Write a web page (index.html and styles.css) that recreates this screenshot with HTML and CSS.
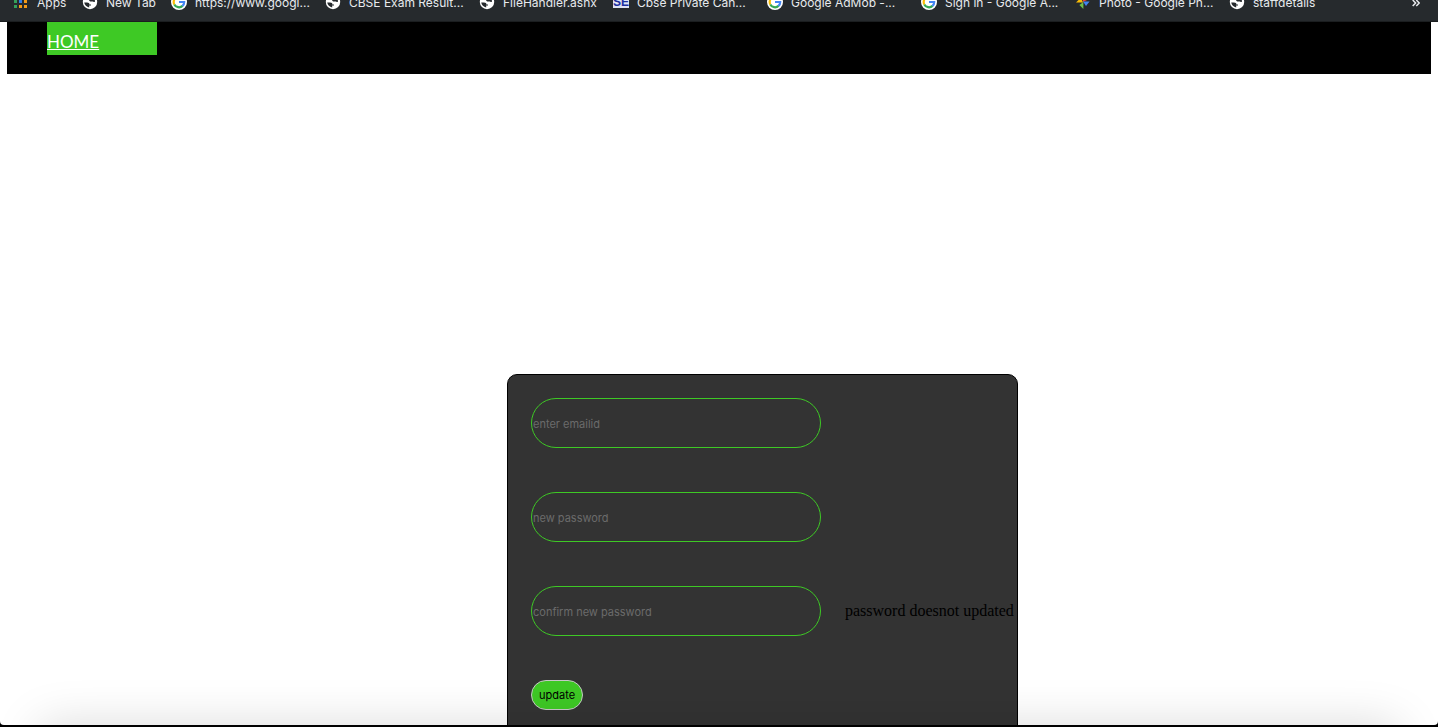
FILE: index.html
```html
<!DOCTYPE html>
<html lang="en">
<head>
<meta charset="utf-8">
<title>update</title>
<link rel="stylesheet" href="styles.css">
</head>
<body>
<svg class="symbols" aria-hidden="true">
  <symbol id="globe" viewBox="0 0 16 16">
    <circle cx="8" cy="8" r="7.2" fill="#fff"/>
    <path d="M2.2 8.6 H5 C6.8 8.6 7.4 9.4 7.4 10.4 H9 V11.6 H7.2 V13.4 C4.6 13 2.6 11.2 2.2 8.6Z M8.4 3 H10.4 C12 4 12.9 5.4 13 7.4 C12.4 8.4 11.4 8.2 10.8 7.6 H8.2 L7 6.4 L8.4 5.2Z" fill="#262a2d"/>
  </symbol>
  <symbol id="google" viewBox="0 0 16 16">
    <circle cx="8" cy="8" r="8" fill="#fff"/>
    <path d="M12 4 A5.3 5.3 0 0 0 3.3 5.6" fill="none" stroke="#ea4335" stroke-width="2.2"/>
    <path d="M3.3 5.6 A5.3 5.3 0 0 0 3.3 10.4" fill="none" stroke="#fbbc05" stroke-width="2.2"/>
    <path d="M3.3 10.4 A5.3 5.3 0 0 0 11.6 11.9" fill="none" stroke="#34a853" stroke-width="2.2"/>
    <path d="M8 8 H13.2 A5.3 5.3 0 0 1 11.4 12" fill="none" stroke="#4285f4" stroke-width="2.2"/>
  </symbol>
</svg>
<nav class="bookmarks">
  <a class="bookmark apps" href="#"><svg class="icon" viewBox="0 0 16 16"><path d="M0 1h3v3H0z M0 6h3v3H0z M0 11h3v3H0z" fill="#34a05a"/><path d="M5 1h3v3H5z M5 6h3v3H5z" fill="#2f7de9"/><path d="M10 1h3v3h-3z M10 6h3v3h-3z M5 11h3v3H5z M10 11h3v3h-3z" fill="#f29a18"/></svg>Apps</a>
  <a class="bookmark new-tab" href="#"><svg class="icon"><use href="#globe"/></svg>New Tab</a>
  <a class="bookmark" href="#"><svg class="icon"><use href="#google"/></svg>https://www.googl...</a>
  <a class="bookmark" href="#"><svg class="icon"><use href="#globe"/></svg>CBSE Exam Result...</a>
  <a class="bookmark short" href="#"><svg class="icon"><use href="#globe"/></svg>FileHandler.ashx</a>
  <a class="bookmark" href="#"><span class="icon badge">SE</span>Cbse Private Can...</a>
  <a class="bookmark" href="#"><svg class="icon"><use href="#google"/></svg>Google AdMob -...</a>
  <a class="bookmark" href="#"><svg class="icon"><use href="#google"/></svg>Sign in - Google A...</a>
  <a class="bookmark" href="#"><svg class="icon" viewBox="0 0 16 16"><path d="M8 8V1l5 4.5L8 8z" fill="#ea4335"/><path d="M8 8.4H1L6 3.6z" fill="#fbbc05"/><path d="M8 7.4h6.6L11 12z" fill="#4285f4"/><path d="M8.4 8v7L4.4 11z" fill="#6fbf4a"/></svg>Photo - Google Ph...</a>
  <a class="bookmark" href="#"><svg class="icon"><use href="#globe"/></svg>staffdetails</a>
  <button class="more" type="button" aria-label="»"><svg width="8" height="8" viewBox="0 0 8 8"><path d="M.7 1 3.6 4 .7 7 M4.3 1 7.2 4 4.3 7" fill="none" stroke="#e8eaed" stroke-width="1.5"/></svg></button>
</nav>
<main class="page">
  <nav class="menu"><a class="menu-item" href="#">HOME</a></nav>
  <form class="card">
    <input class="field" type="email" placeholder="enter emailid" aria-label="enter emailid">
    <input class="field" type="password" placeholder="new password" aria-label="new password">
    <input class="field" type="password" placeholder="confirm new password" aria-label="confirm new password">
    <output class="message">password doesnot updated</output>
    <button class="update" type="button">update</button>
  </form>
  <div class="shade"></div>
</main>
</body>
</html>
```
FILE: styles.css
```css
* { box-sizing: border-box; }
body {
  margin: 0;
  height: 100vh;
  display: flex;
  flex-direction: column;
  overflow: hidden;
  background: #000;
  padding-bottom: 2px;
  font-family: "Liberation Serif", serif;
  font-size: 16px;
}
.symbols { display: none; }
.bookmarks {
  flex: none;
  height: 22px;
  padding: 0 18px 8px 14px;
  display: flex;
  align-items: flex-end;
  overflow: hidden;
  background: #262a2d;
  border-bottom: 1px solid #1b1e20;
  font: 12px/20px Inter, sans-serif;
}
.bookmark {
  flex: none;
  width: 154px;
  display: flex;
  align-items: center;
  gap: 8px;
  color: #e8eaed;
  text-decoration: none;
  white-space: nowrap;
}
.apps { width: 68px; gap: 7px; }
.new-tab { width: 89px; }
.short { width: 134px; }
.icon { width: 16px; height: 16px; flex: none; margin-bottom: 2px; }
.badge {
  height: 12px;
  background: #dfe3f5;
  color: #1c2fa0;
  font: bold 12px/12px "Liberation Sans", sans-serif;
  text-align: center;
}
.more {
  margin-left: auto;
  padding: 0;
  height: 20px;
  display: flex;
  align-items: center;
  border: 0;
  background: none;
}
.page {
  flex: 1;
  min-height: 0;
  position: relative;
  overflow: hidden;
  padding: 0 7px;
  background: #fff;
  border-radius: 0 0 4px 4px;
}
.menu {
  height: 52px;
  padding-left: 40px;
  background: #000;
}
.menu-item {
  display: block;
  width: 110px;
  height: 33px;
  padding-top: 8px;
  background: #3ec925;
  color: #fff;
  font: 17px/24px Lato, sans-serif;
}
.card {
  width: max-content;
  min-height: 380px;
  margin: 300px 0 0 500px;
  padding: 23px 3px 23px 23px;
  display: grid;
  grid-template-columns: 290px max-content;
  align-content: start;
  align-items: center;
  gap: 44px 24px;
  background: #333;
  border: 1px solid #000;
  border-radius: 10px;
}
.field {
  grid-column: 1;
  width: 100%;
  height: 50px;
  padding: 2px 1px 0;
  border: 1px solid #3ec925;
  border-radius: 25px;
  background: transparent;
  color: #fff;
  font: 11px Inter, sans-serif;
}
.field::placeholder { color: #6b6b6b; opacity: 1; }
.message { grid-column: 2; }
.update {
  grid-column: 1;
  justify-self: start;
  height: 30px;
  padding: 0 7px;
  border: 1px solid #c8c8c8;
  border-radius: 15px;
  background: #3ec925;
  color: #000;
  font: 11px Inter, sans-serif;
}
.shade {
  position: absolute;
  left: 40px;
  right: 40px;
  top: 100%;
  height: 60px;
  box-shadow: 0 0 48px rgba(0, 0, 0, 0.15);
}
```
